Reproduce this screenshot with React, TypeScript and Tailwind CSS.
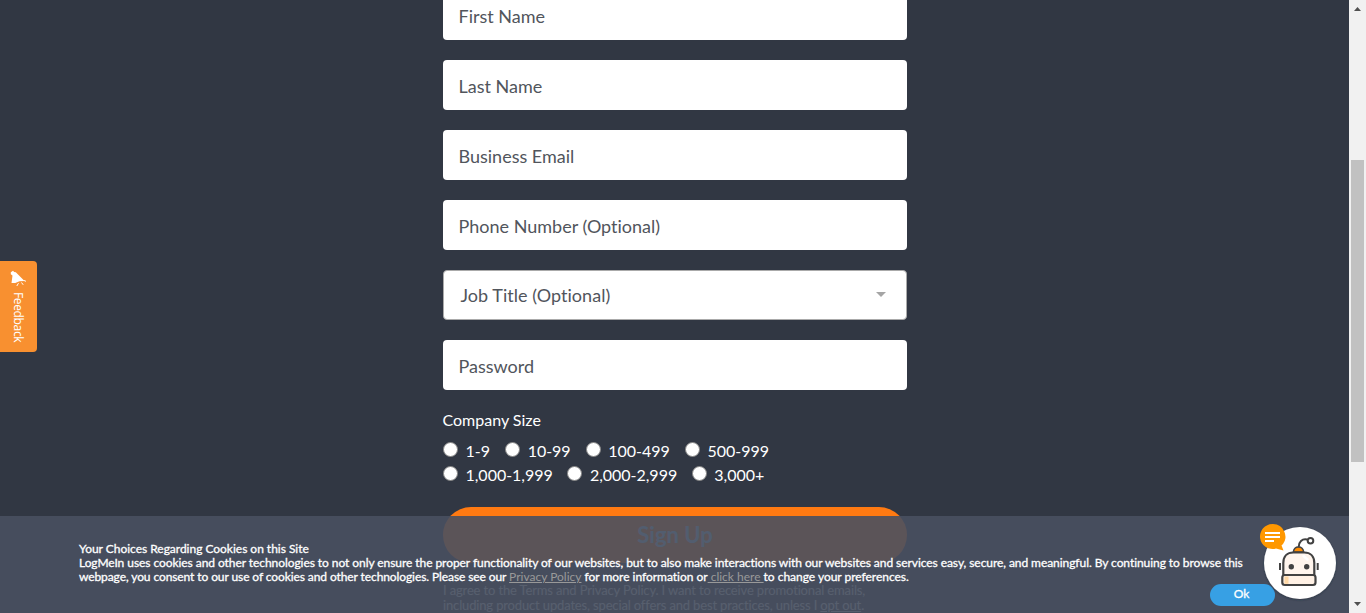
import type { ReactNode } from 'react';

function Field({ children, first = false }: { children: ReactNode; first?: boolean }) {
  return (
    <div
      className={`flex h-[50px] shrink-0 items-center rounded bg-white pr-4 pl-[15.500px] pt-[3px] text-[18px] text-[#51555c] ${first ? '-mt-[10px]' : ''}`}
    >
      {children}
    </div>
  );
}

function Choice({ children }: { children: string }) {
  return (
    <label className="flex h-6 items-start">
      <span className="mt-[3px] mr-[7.500px] size-[15px] shrink-0 rounded-full border border-[#858585] bg-white" />
      <span className="text-[16px] leading-6 tracking-[-0.02px]">{children}</span>
    </label>
  );
}

function Megaphone() {
  return (
    <svg width="17" height="17" viewBox="0 0 17 17" fill="none">
      <path d="M.8 2.300 3 .8 4.200 2l1.600.2L14.500 11l-5 .3-4.200 1.700L1.500 13 2.500 5.500.8 4.200Z" fill="#fff" />
      <path d="m14 10.500 2 .8M11.500 12.500l1.700 2.300M8.500 13.200 6.800 16" stroke="#fff" strokeWidth="1" />
    </svg>
  );
}

function Bot() {
  return (
    <svg width="85" height="85" viewBox="0 0 85 85" fill="none">
      <defs>
        <filter id="shade" x="-10%" y="-10%" width="120%" height="125%">
          <feDropShadow dx="0" dy="1" stdDeviation="1" floodColor="#1d222c" floodOpacity=".45" />
        </filter>
      </defs>
      <circle cx="45" cy="43" r="36" fill="#fff" filter="url(#shade)" />
      <path d="M43.700 27c0-5 3.300-8.500 8.300-7.500" stroke="#424242" strokeWidth="2" strokeLinecap="round" />
      <circle cx="55.500" cy="20.700" r="2.800" stroke="#424242" strokeWidth="2" />
      <path d="M38.300 32c.5-3.500 2.500-5 5.200-5s4.700 1.500 5.200 5Z" fill="#ff8c00" stroke="#424242" strokeWidth="1.500" />
      <path d="M28.300 55V43c0-6.500 4-10.500 10-10.500h11c6 0 10 4 10 10.500v12Z" fill="#fff5ed" stroke="#424242" strokeWidth="2.200" />
      <rect x="27.300" y="55" width="33.200" height="10" rx="2.500" fill="#fff1e5" stroke="#424242" strokeWidth="2.200" />
      <path d="M29.500 56.500h4v7.300h-4Z" fill="#ffd8a5" />
      <circle cx="36.300" cy="46.700" r="2.700" fill="#424242" />
      <circle cx="51.700" cy="46.700" r="2.700" fill="#424242" />
      <path d="M25 43v7M62.700 43v7" stroke="#424242" strokeWidth="2" />
      <path d="m48.500 36 4 3.500" stroke="#fff" strokeWidth="2.500" strokeLinecap="round" />
      <path d="M17.500 4a12.500 12.500 0 1 0 3.500 24.500l7.500 2-2-5A12.500 12.500 0 0 0 17.500 4Z" fill="#ff9800" />
      <path d="M10 13h15M10 17h15M10 21h9" stroke="#fff" strokeWidth="2" />
    </svg>
  );
}

export default function App() {
  return (
    <div className="flex h-[613px] w-[1366px] overflow-hidden bg-[#313743] font-['Lato',sans-serif] [font-variant-ligatures:none]">
      <main className="relative flex w-[1349px] shrink-0 flex-col overflow-hidden">
        <form className="ml-[443px] flex w-[464px] flex-col">
          <div className="flex flex-col gap-5">
            <Field first>First Name</Field>
            <Field>Last Name</Field>
            <Field>Business Email</Field>
            <Field>Phone Number (Optional)</Field>
            <div className="flex h-[50px] items-center justify-between rounded border border-[#aaa] bg-white pr-5 pl-[16.500px] text-[18px] text-[#51555c]">
              <span className="tracking-[0.04px]">Job Title (Optional)</span>
              <svg className="mb-px" width="10" height="5" viewBox="0 0 10 5"><path d="M0 0h10L5 5Z" fill="#a5a5a5" /></svg>
            </div>
            <Field>Password</Field>
          </div>
          <div className="-ml-[0.500px] mt-[18px] text-[16px] leading-6 text-white">Company Size</div>
          <div className="mt-[7px] flex flex-col text-white">
            <div className="flex gap-[15.200px]">
              <Choice>1-9</Choice>
              <Choice>10-99</Choice>
              <Choice>100-499</Choice>
              <Choice>500-999</Choice>
            </div>
            <div className="flex gap-[14.700px]">
              <Choice>1,000-1,999</Choice>
              <Choice>2,000-2,999</Choice>
              <Choice>3,000+</Choice>
            </div>
          </div>
          <div className="mt-5 flex h-[56px] shrink-0 items-center justify-center rounded-full bg-[#ff7a12] pb-px text-[22px] font-bold text-[#a0d8ee]">
            Sign Up
          </div>
          <p className="mt-5 text-[13px] leading-[15px] tracking-[-0.15px] whitespace-nowrap text-[#d8e8e8]">
            I agree to the Terms and Privacy Policy. I want to receive promotional emails,<br />
            including product updates, special offers and best practices, unless I <span className="underline">opt out</span>.
          </p>
        </form>

        <aside className="absolute top-[261px] left-0 flex h-[91px] w-[37px] flex-col items-center rounded-r bg-[#f89030] pt-[9px] text-white">
          <Megaphone />
          <span className="mt-[5px] mr-px font-['Open_Sans',sans-serif] text-[12px] leading-4 tracking-[-0.35px] [writing-mode:vertical-rl]">Feedback</span>
        </aside>

        <section className="absolute top-[516px] left-0 h-[97px] w-full bg-[#495061]/90 pt-[26px] pl-[79px] text-[12px] leading-[14px] whitespace-nowrap text-white [-webkit-text-stroke:0.3px_white]">
          <p className="tracking-[-0.02px]">Your Choices Regarding Cookies on this Site</p>
          <p className="tracking-[-0.063px]">LogMeIn uses cookies and other technologies to not only ensure the proper functionality of our websites, but to also make interactions with our websites and services easy, secure, and meaningful. By continuing to browse this</p>
          <p>
            <span className="tracking-[-0.095px]">webpage, you consent to our use of cookies and other technologies. Please see our{' '}</span>
            <span className="text-[#999] underline [-webkit-text-stroke:0]">Privacy Policy</span><span className="tracking-[-0.020px]"> for more information or</span>
            <span className="text-[#999] underline [-webkit-text-stroke:0]"> click here </span><span className="tracking-[-0.020px]">to change your preferences.</span>
          </p>
          <button className="absolute top-[68px] left-[1210px] h-[22px] w-[65px] rounded-full bg-[#37a0e4] pr-[2px] pb-[2px]">Ok</button>
        </section>
        <div className="absolute top-[520px] left-[1255px]"><Bot /></div>
      </main>
      <div className="flex w-[17px] shrink-0 flex-col items-center bg-[#f1f1f1]">
        <svg className="mt-[7px]" width="7" height="4" viewBox="0 0 7 4"><path d="M3.500 0 7 4H0Z" fill="#505050" /></svg>
        <div className="mt-[149px] h-[302px] w-[13px] bg-[#c1c1c1]" />
        <svg className="mt-[140px]" width="7" height="4" viewBox="0 0 7 4"><path d="M0 0h7L3.500 4Z" fill="#505050" /></svg>
      </div>
    </div>
  );
}
